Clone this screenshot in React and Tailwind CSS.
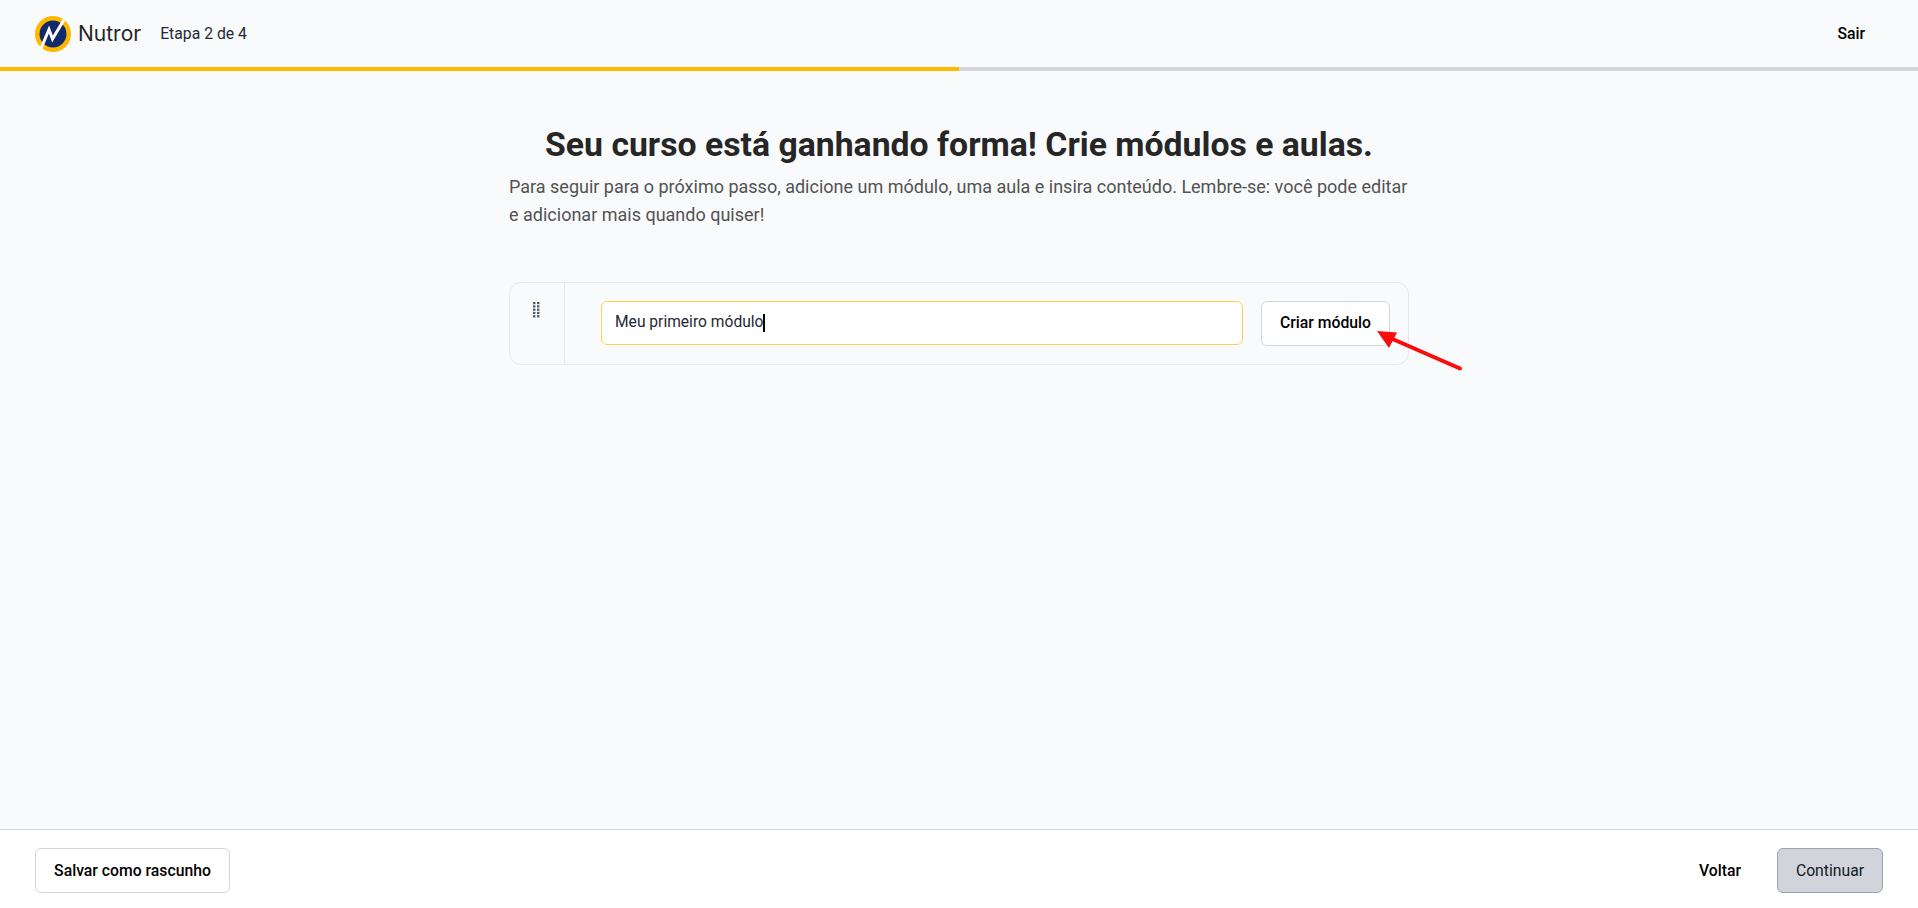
const Logo = () => (
  <svg width="38" height="38" viewBox="0 0 38 38" className="shrink-0 mt-[1px]">
    <circle cx="19" cy="19" r="18" fill="#ffb800" />
    <circle cx="19" cy="19" r="13.5" fill="#12296b" />
    <path d="M7 33.5 L15 14.5 L18.5 24 L31 3" fill="none" stroke="#ffffff" strokeWidth="3" strokeLinejoin="miter" />
  </svg>
)

const DragHandle = () => (
  <svg width="8" height="16" viewBox="0 0 8 16" fill="#4b5563">
    {[0, 3.3, 6.6, 9.9, 13.2].map((y) => (
      <g key={y}>
        <rect x="0" y={y} width="2.4" height="2.2" />
        <rect x="4" y={y} width="2.4" height="2.2" />
      </g>
    ))}
  </svg>
)

const Arrow = () => (
  <svg width="100" height="54" viewBox="0 0 100 54" className="absolute left-[1370px] top-[325px] pointer-events-none">
    <path d="M90 43.5 L18 12" stroke="#f80c0c" strokeWidth="4" strokeLinecap="round" />
    <path d="M7 6 L27 7.5 L19 23 Z" fill="#f80c0c" />
  </svg>
)

export default function App() {
  return (
    <div className="relative h-[908px] flex flex-col bg-[#f9fafb] font-['Roboto',sans-serif] text-[#111827] overflow-hidden">
      <header className="h-[67px] shrink-0 flex items-center pl-[34px] pr-[53px]">
        <Logo />
        <span className="ml-[6px] text-[21px] text-[#262626] font-['Inter',sans-serif] font-normal">Nutror</span>
        <span className="ml-[19px] text-[15.75px] text-[#1f2937]">Etapa 2 de 4</span>
        <button className="ml-auto text-[15.75px] font-medium text-black">Sair</button>
      </header>
      <div className="h-[4px] shrink-0 bg-[#d1d5db]">
        <div className="h-full w-1/2 bg-[#ffb800]" />
      </div>

      <main className="flex-1 w-[900px] mx-auto pt-[54px]">
        <h1 className="text-center text-[33.75px] leading-[40px] font-bold text-[#262626]">Seu curso está ganhando forma! Crie módulos e aulas.</h1>
        <p className="mt-[8px] text-lg leading-[28px] text-[#525252]">
          Para seguir para o próximo passo, adicione um módulo, uma aula e insira conteúdo. Lembre-se: você pode editar e adicionar mais quando quiser!
        </p>
        <div className="mt-[53px] h-[83px] flex rounded-xl border border-[#e5e7eb]">
          <div className="w-[55px] shrink-0 border-r border-[#e5e7eb] flex justify-center pt-[19px]">
            <DragHandle />
          </div>
          <div className="flex-1 flex gap-[18px] pt-[18px] pl-[36px] pr-[18px]">
            <div className="w-[642px] h-[44px] bg-white rounded-md border border-[#fcd34d] flex items-center px-[13px] text-[15.6px] text-[#1f2937]">
              Meu primeiro módulo<span className="w-[1.5px] h-[18px] bg-black" />
            </div>
            <button className="w-[129px] h-[45px] pb-[1px] bg-white rounded-md border border-[#d1d5db] text-[15.75px] font-medium text-black">Criar módulo</button>
          </div>
        </div>
      </main>

      <footer className="h-[79px] shrink-0 bg-white border-t border-[#d1d5db] flex items-center pt-[3px] px-[35px]">
        <button className="w-[195px] h-[45px] rounded-md border border-[#d1d5db] text-[15.75px] font-medium text-black">Salvar como rascunho</button>
        <button className="ml-auto text-[15.75px] font-medium text-black">Voltar</button>
        <button className="ml-[36px] w-[106px] h-[45px] rounded-md bg-[#d1d5db] border border-[#9ca3af] text-[15.75px] text-[#111827]">Continuar</button>
      </footer>

      <Arrow />
    </div>
  )
}
